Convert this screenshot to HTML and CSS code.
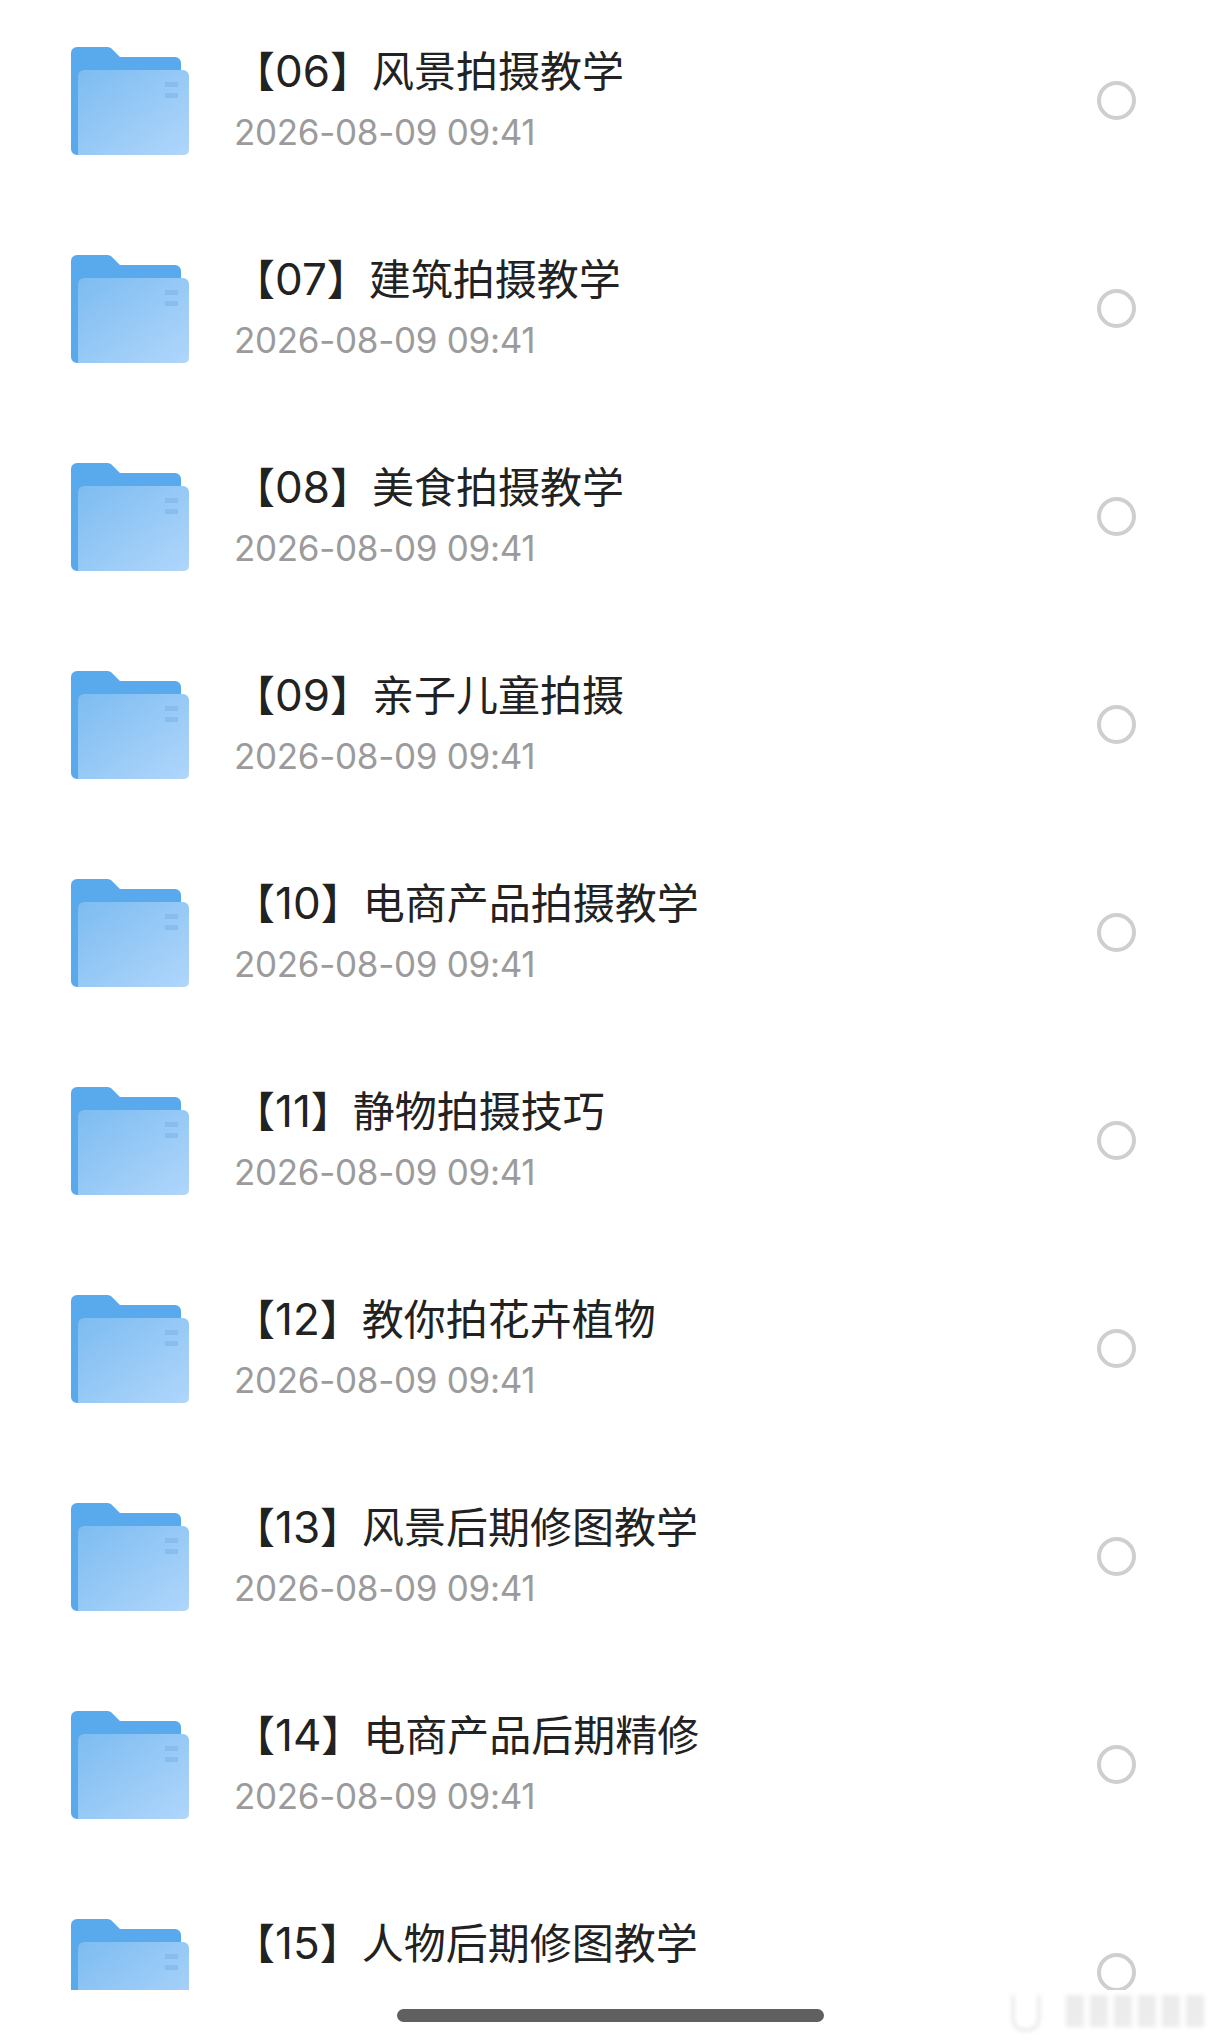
FILE: index.html
```html
<!DOCTYPE html>
<html lang="zh-CN">
  <head>
    <meta charset="UTF-8" />
    <meta name="viewport" content="width=device-width, initial-scale=1.0" />
    <title>文件夹</title>
    <link rel="stylesheet" href="styles.css">
  </head>
  <body>
    <svg class="defs" width="0" height="0">
      <defs>
        <linearGradient id="front" x1="0" y1="0" x2="1" y2="1">
          <stop offset="0" stop-color="#7dbcf1" />
          <stop offset="1" stop-color="#b0d6fb" />
        </linearGradient>
        <symbol id="folder" viewBox="0 0 118 108">
          <path d="M0 6a6 6 0 0 1 6-6h30a7 7 0 0 1 6 3l7 7h55a6 6 0 0 1 6 6V108H6a6 6 0 0 1-6-6z" fill="#59a9ed" />
          <path d="M7 29a6 6 0 0 1 6-6h99a6 6 0 0 1 6 6v74a5 5 0 0 1-5 5H7z" fill="url(#front)" />
          <rect x="94" y="35" width="13" height="5" fill="#82b7e8" opacity="0.7" />
          <rect x="94" y="46" width="13" height="5" fill="#82b7e8" opacity="0.7" />
        </symbol>
      </defs>
    </svg>

    <div class="screen">
      <ul class="list">
        <li class="row">
          <svg class="folder"><use href="#folder" /></svg>
          <div class="info">
            <div class="name">【<span class="num">06</span>】风景拍摄教学</div>
            <div class="date">2026-08-09 09:41</div>
          </div>
          <span class="radio"></span>
        </li>
        <li class="row">
          <svg class="folder"><use href="#folder" /></svg>
          <div class="info">
            <div class="name">【<span class="num">07</span>】建筑拍摄教学</div>
            <div class="date">2026-08-09 09:41</div>
          </div>
          <span class="radio"></span>
        </li>
        <li class="row">
          <svg class="folder"><use href="#folder" /></svg>
          <div class="info">
            <div class="name">【<span class="num">08</span>】美食拍摄教学</div>
            <div class="date">2026-08-09 09:41</div>
          </div>
          <span class="radio"></span>
        </li>
        <li class="row">
          <svg class="folder"><use href="#folder" /></svg>
          <div class="info">
            <div class="name">【<span class="num">09</span>】亲子儿童拍摄</div>
            <div class="date">2026-08-09 09:41</div>
          </div>
          <span class="radio"></span>
        </li>
        <li class="row">
          <svg class="folder"><use href="#folder" /></svg>
          <div class="info">
            <div class="name">【<span class="num">10</span>】电商产品拍摄教学</div>
            <div class="date">2026-08-09 09:41</div>
          </div>
          <span class="radio"></span>
        </li>
        <li class="row">
          <svg class="folder"><use href="#folder" /></svg>
          <div class="info">
            <div class="name">【<span class="num">11</span>】静物拍摄技巧</div>
            <div class="date">2026-08-09 09:41</div>
          </div>
          <span class="radio"></span>
        </li>
        <li class="row">
          <svg class="folder"><use href="#folder" /></svg>
          <div class="info">
            <div class="name">【<span class="num">12</span>】教你拍花卉植物</div>
            <div class="date">2026-08-09 09:41</div>
          </div>
          <span class="radio"></span>
        </li>
        <li class="row">
          <svg class="folder"><use href="#folder" /></svg>
          <div class="info">
            <div class="name">【<span class="num">13</span>】风景后期修图教学</div>
            <div class="date">2026-08-09 09:41</div>
          </div>
          <span class="radio"></span>
        </li>
        <li class="row">
          <svg class="folder"><use href="#folder" /></svg>
          <div class="info">
            <div class="name">【<span class="num">14</span>】电商产品后期精修</div>
            <div class="date">2026-08-09 09:41</div>
          </div>
          <span class="radio"></span>
        </li>
        <li class="row">
          <svg class="folder"><use href="#folder" /></svg>
          <div class="info">
            <div class="name">【<span class="num">15</span>】人物后期修图教学</div>
          </div>
          <span class="radio"></span>
        </li>
      </ul>
      <div class="nav"><span class="home-bar"></span></div>

      <div class="watermark">
        <span class="mark-logo"></span>
        <span class="mark-block"></span>
        <span class="mark-block"></span>
        <span class="mark-block"></span>
        <span class="mark-block"></span>
        <span class="mark-block"></span>
        <span class="mark-block"></span>
      </div>
    </div>
  </body>
</html>
```

FILE: styles.css
```css
body {
  font-family: "Inter", "Noto Sans CJK SC", sans-serif;
  margin: 0;
  padding: 0;
  background-color: #fff;
}

.defs {
  display: block;
  height: 0;
}

.screen {
  position: relative;
  width: 1220px;
  height: 2042px;
  overflow: hidden;
  display: flex;
  flex-direction: column;
}

.list {
  list-style: none;
  margin: 0;
  padding: 20px 0 0;
  height: 1970px;
  overflow: hidden;
  display: flex;
  flex-direction: column;
  gap: 48px;
}

.row {
  flex: none;
  height: 160px;
  display: flex;
  align-items: center;
  padding: 0 84px 0 71px;
}

.folder {
  width: 118px;
  height: 108px;
  flex: none;
  margin-right: 46px;
  margin-top: 2px;
}

.info {
  flex: 1;
  align-self: flex-start;
  padding-top: 22px;
}

.name {
  font-family: "Inter", "Noto Sans CJK SC", sans-serif;
  font-size: 42px;
  line-height: 58px;
  color: #222;
  margin-left: -2px;
}

.num {
  font-size: 44px;
}

.date {
  font-size: 35px;
  line-height: 44px;
  letter-spacing: -0.3px;
  margin-top: 9px;
  margin-left: -1px;
  color: #9b9b9b;
}

.radio {
  width: 39px;
  height: 39px;
  box-sizing: border-box;
  border: 4px solid #cfcfcf;
  border-radius: 50%;
  flex: none;
}

.nav {
  flex: 1;
  display: flex;
  justify-content: center;
  padding-top: 19px;
}

.home-bar {
  width: 427px;
  height: 13px;
  border-radius: 7px;
  background-color: #606060;
}

.watermark {
  position: absolute;
  left: 1012px;
  top: 1995px;
  display: flex;
  gap: 6px;
  filter: blur(2px);
}

.mark-logo {
  width: 28px;
  height: 36px;
  margin-right: 20px;
  box-sizing: border-box;
  border: 2px solid #dcdcdc;
  border-top: none;
  border-radius: 0 0 12px 12px;
}

.mark-block {
  width: 18px;
  height: 32px;
  background-color: #ececec;
}
```
